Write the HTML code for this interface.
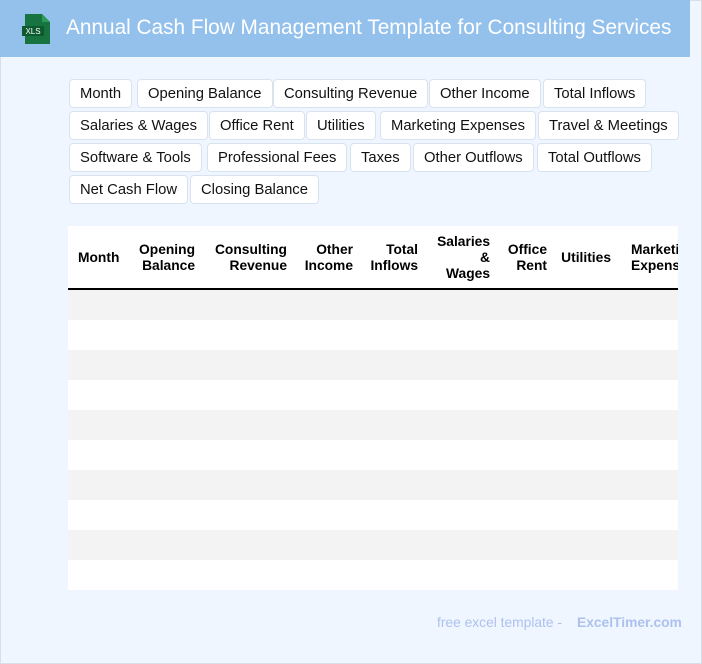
<!DOCTYPE html>
<html><head><meta charset="utf-8"><style>
*{margin:0;padding:0;box-sizing:border-box}
body{width:702px;height:664px;background:#f0f6ff;font-family:"Liberation Sans",Arial,sans-serif;position:relative;overflow:hidden;box-shadow:inset 0 0 0 1px #d6dfea}
.hdr{position:absolute;left:0;top:0;width:690px;height:57px;background:#93c1ec}
.hdr h1{position:absolute;left:66px;top:16px;font-weight:normal;font-size:20.8px;color:#fff;white-space:nowrap}
.tag{position:absolute;height:29px;background:#fff;border:1px solid #d9e3ef;border-radius:4px;font-size:14.8px;line-height:28px;padding:0 10px;color:#111;white-space:nowrap}
.tbl{position:absolute;left:68px;top:226px;width:610px;height:364px;background:#fff;overflow:hidden}
.th{position:absolute;top:0;height:63px;display:flex;align-items:center;justify-content:flex-end;text-align:right;font-weight:bold;font-size:13.8px;line-height:16px;color:#000;white-space:nowrap}
.line{position:absolute;left:0;top:62px;width:610px;height:1.5px;background:#000}
.row{position:absolute;left:0;width:610px;height:30px}
.foot{position:absolute;top:615px;font-size:13.8px;color:#adc1ee}
</style></head><body>
<div class="hdr">
<svg style="position:absolute;left:20px;top:13px" width="32" height="32" viewBox="0 0 32 32">
<path d="M5 1h17l8 8v22H5z" fill="#17733f"/><path d="M22 1v8h8z" fill="#2a9a5a"/>
<rect x="2" y="13" width="22" height="10" fill="#0e5a2f"/>
<text x="13" y="21" font-size="8" fill="#fff" text-anchor="middle" font-family="Liberation Sans">XLS</text>
</svg>
<h1>Annual Cash Flow Management Template for Consulting Services</h1>
</div>
<div class="tag" style="left:69px;top:79px">Month</div>
<div class="tag" style="left:137px;top:79px">Opening Balance</div>
<div class="tag" style="left:273px;top:79px">Consulting Revenue</div>
<div class="tag" style="left:429px;top:79px">Other Income</div>
<div class="tag" style="left:543px;top:79px">Total Inflows</div>
<div class="tag" style="left:69px;top:111px">Salaries &amp; Wages</div>
<div class="tag" style="left:209px;top:111px">Office Rent</div>
<div class="tag" style="left:306px;top:111px">Utilities</div>
<div class="tag" style="left:380px;top:111px">Marketing Expenses</div>
<div class="tag" style="left:538px;top:111px">Travel &amp; Meetings</div>
<div class="tag" style="left:69px;top:143px">Software &amp; Tools</div>
<div class="tag" style="left:207px;top:143px">Professional Fees</div>
<div class="tag" style="left:350px;top:143px">Taxes</div>
<div class="tag" style="left:413px;top:143px">Other Outflows</div>
<div class="tag" style="left:537px;top:143px">Total Outflows</div>
<div class="tag" style="left:69px;top:175px">Net Cash Flow</div>
<div class="tag" style="left:190px;top:175px">Closing Balance</div>
<div class="tbl">
<div class="th" style="left:10px;justify-content:flex-start">Month</div>
<div class="th" style="right:483px">Opening<br>Balance</div>
<div class="th" style="right:391px">Consulting<br>Revenue</div>
<div class="th" style="right:325px">Other<br>Income</div>
<div class="th" style="right:260px">Total<br>Inflows</div>
<div class="th" style="right:188px">Salaries<br>&amp;<br>Wages</div>
<div class="th" style="right:131px">Office<br>Rent</div>
<div class="th" style="right:67px">Utilities</div>
<div class="th" style="left:563px;justify-content:flex-start;text-align:left">Marketing<br>Expenses</div>
<div class="line"></div>
<div class="row" style="top:64px;background:#f3f3f3"></div>
<div class="row" style="top:124px;background:#f3f3f3"></div>
<div class="row" style="top:184px;background:#f3f3f3"></div>
<div class="row" style="top:244px;background:#f3f3f3"></div>
<div class="row" style="top:304px;background:#f3f3f3"></div>
</div>
<div class="foot" style="left:437px">free excel template -</div>
<div class="foot" style="left:577px;font-weight:bold">ExcelTimer.com</div>
</body></html>
